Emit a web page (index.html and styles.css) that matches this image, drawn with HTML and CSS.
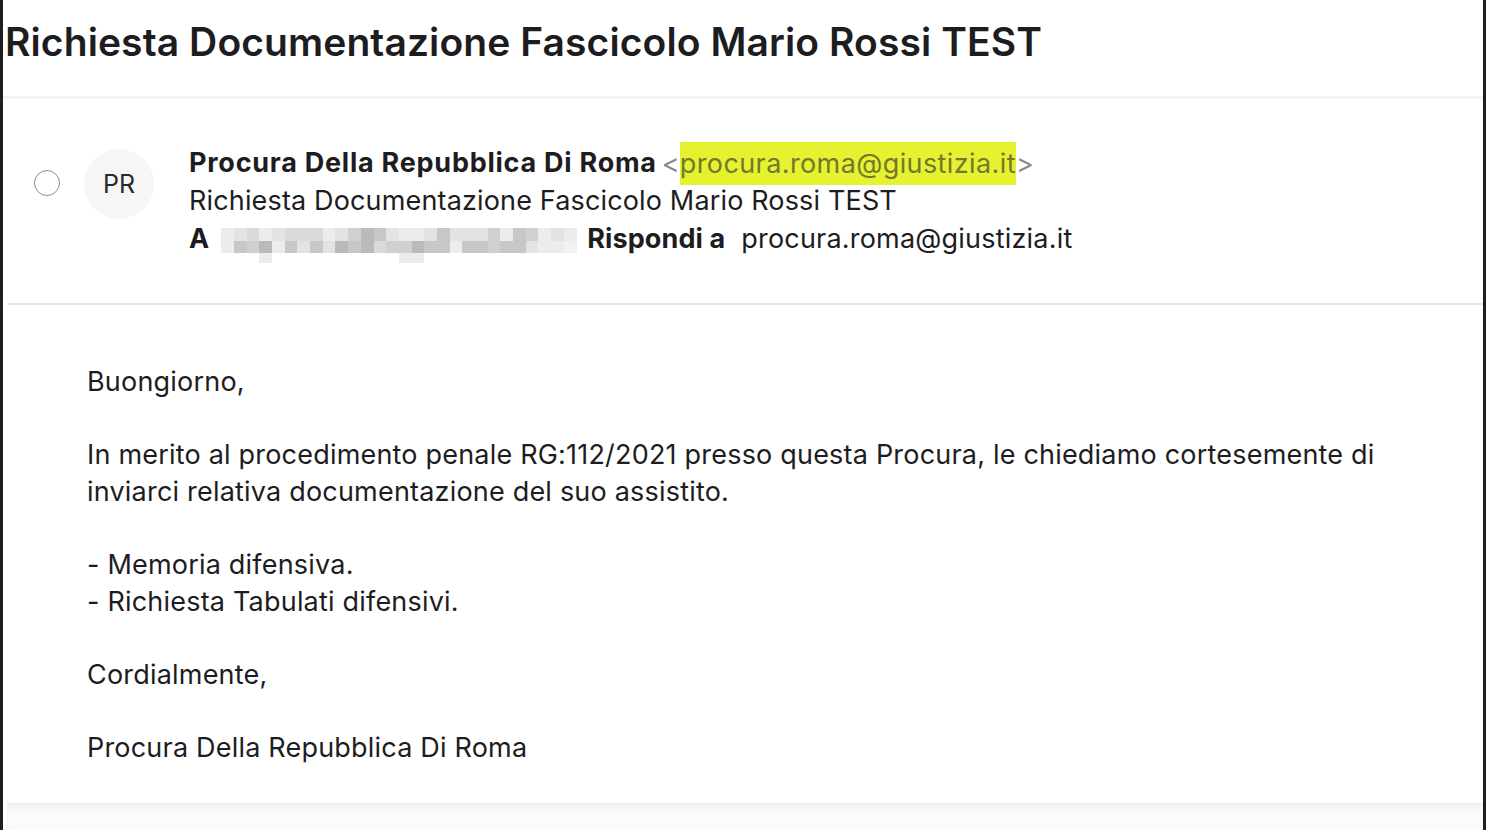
FILE: index.html
```html
<!DOCTYPE html>
<html>
  <head>
    <meta charset="UTF-8" />
    <title>Richiesta Documentazione Fascicolo Mario Rossi TEST</title>
    <link rel="stylesheet" href="styles.css">
  </head>
  <body>
    <div class="frame">
      <h1 class="subject">Richiesta Documentazione Fascicolo Mario Rossi TEST</h1>

      <div class="header">
        <span class="radio"></span>
        <span class="avatar">PR</span>
        <div class="meta">
          <div class="row">
            <strong class="sender">Procura Della Repubblica Di Roma</strong>
            <span class="addr">&lt;<span class="mark">procura.roma@giustizia.it</span>&gt;</span>
          </div>
          <div class="row">Richiesta Documentazione Fascicolo Mario Rossi TEST</div>
          <div class="row">
            <strong>A</strong>
            <span class="blur">
              <i class="g1"></i><i class="g2"></i><i class="g3"></i><i class="g1"></i><i class="g2"></i><i class="g3"></i><i class="g3"></i><i class="g3"></i><i class="g1"></i><i class="g2"></i><i class="g4"></i><i class="g6"></i><i class="g5"></i><i class="g2"></i><i class="g1"></i><i class="g1"></i><i class="g2"></i><i class="g5"></i><i class="g2"></i><i class="g2"></i><i class="g2"></i><i class="g4"></i><i class="g1"></i><i class="g5"></i><i class="g4"></i><i class="g1"></i><i class="g2"></i><i class="g1"></i>
              <i class="g1"></i><i class="g5"></i><i class="g4"></i><i class="g6"></i><i class="g1"></i><i class="g5"></i><i class="g2"></i><i class="g5"></i><i class="g2"></i><i class="g6"></i><i class="g5"></i><i class="g6"></i><i class="g3"></i><i class="g4"></i><i class="g4"></i><i class="g6"></i><i class="g5"></i><i class="g5"></i><i class="g1"></i><i class="g5"></i><i class="g5"></i><i class="g4"></i><i class="g5"></i><i class="g5"></i><i class="g2"></i><i class="g1"></i><i class="g1"></i><i class="g0"></i>
              <i></i><i></i><i></i><i class="g1"></i><i></i><i></i><i></i><i></i><i></i><i></i><i></i><i></i><i></i><i></i><i class="g1"></i><i class="g1"></i><i></i><i></i><i></i><i></i><i></i><i></i><i></i><i></i><i></i><i></i><i></i><i></i>
            </span>
            <strong class="reply">Rispondi a</strong>
            <span class="reply-addr">procura.roma@giustizia.it</span>
          </div>
        </div>
      </div>

      <div class="body">
        <p>Buongiorno,</p>
        <p>In merito al procedimento penale RG:112/2021 presso questa Procura, le chiediamo cortesemente di<br>inviarci relativa documentazione del suo assistito.</p>
        <p>- Memoria difensiva.<br>- Richiesta Tabulati difensivi.</p>
        <p>Cordialmente,</p>
        <p>Procura Della Repubblica Di Roma</p>
      </div>

      <div class="footer"></div>
    </div>
  </body>
</html>
```

FILE: styles.css
```css
/* Mail viewer, single message */
html, body {
   margin: 0;
   padding: 0;
   background: #fff;
}
body {
   font-family: Inter, "Noto Sans", sans-serif;
   color: #1d1d1f;
}
.frame {
   box-sizing: border-box;
   width: 1486px;
   height: 830px;
   border-left: 3px solid #1e1e1e;
   border-right: 3px solid #1e1e1e;
   display: flex;
   flex-direction: column;
   overflow: hidden;
}
.subject {
   margin: 0;
   padding: 14px 0 0 2px;
   height: 82px;
   font-size: 39px;
   line-height: 56px;
   font-weight: 600;
   letter-spacing: 0.1px;
   border-bottom: 3px solid #f3f3f3;
}

.header {
   display: flex;
   align-items: flex-start;
   height: 204px;
   margin-left: 4px;
   border-bottom: 2px solid #e6e6e6;
}
.radio {
   box-sizing: border-box;
   width: 26px;
   height: 26px;
   margin: 71px 0 0 27px;
   border: 1.5px solid #8e8e8e;
   border-radius: 50%;
}
.avatar {
   width: 70px;
   height: 70px;
   margin: 50px 0 0 24px;
   border-radius: 50%;
   background: #f6f6f6;
   display: flex;
   align-items: center;
   justify-content: center;
   font-size: 25px;
   color: #2a2a2a;
}
.meta {
   margin: 45px 0 0 35px;
   font-size: 27px;
   line-height: 38px;
   letter-spacing: 0.15px;
}
.row {
   display: flex;
   align-items: center;
   height: 38px;
   white-space: nowrap;
}
.row strong {
   font-weight: 700;
   letter-spacing: 0.1px;
}
.row .sender {
   letter-spacing: 0.75px;
}
.addr {
   margin-left: 5px;
   color: #8a8a8a;
}
.mark {
   display: inline-block;
   background: #e5f230;
   color: #76762e;
   letter-spacing: 0.4px;
   padding: 3px 0 2px;
   line-height: 38px;
}
.blur {
   display: grid;
   grid-template-columns: repeat(28, 12.7px);
   grid-template-rows: 13px 12px 10px;
   margin: 8px 0 0 12px;
   width: 356px;
   align-self: flex-start;
}
.blur i {
   display: block;
}
.g0 { background: #f2f2f2; }
.g1 { background: #ececec; }
.g2 { background: #e3e3e3; }
.g3 { background: #dadada; }
.g4 { background: #d0d0d0; }
.g5 { background: #c7c7c7; }
.g6 { background: #bababa; }
.reply {
   margin-left: 10px;
}
.reply-addr {
   margin-left: 16px;
   letter-spacing: 0.2px;
}

.body {
   flex: none;
   height: 500px;
   box-sizing: border-box;
   margin-left: 4px;
   padding: 58px 0 0 80px;
   font-size: 27px;
   line-height: 37px;
   letter-spacing: 0.2px;
   border-bottom: 2px solid #f0f0f0;
}
.body p {
   margin: 0 0 36px;
}
.footer {
   flex: 1;
   margin-left: 4px;
   background: #fbfbfb;
   box-shadow: inset 0 3px 4px #f3f3f3;
}
```
